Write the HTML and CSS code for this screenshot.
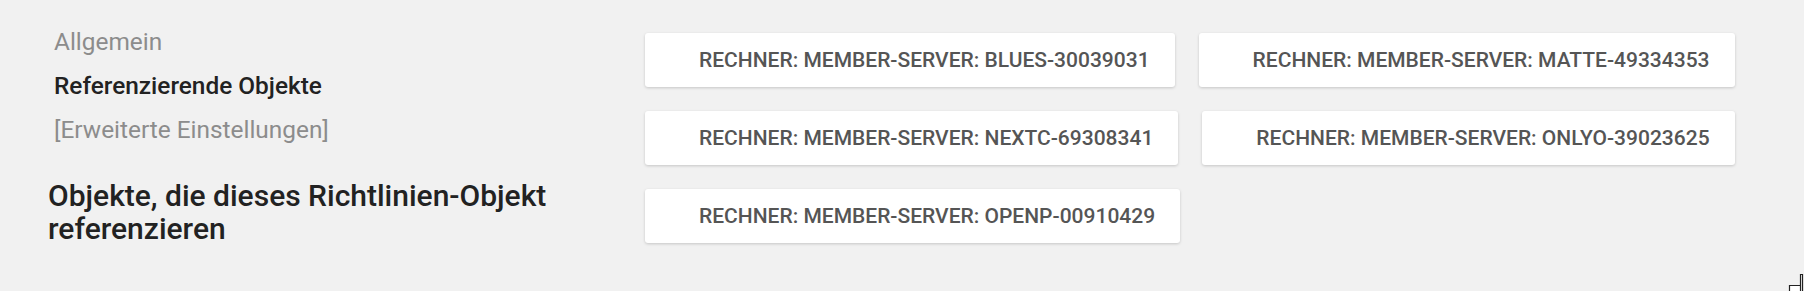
FILE: index.html
```html
<!DOCTYPE html>
<html lang="de">
<head>
<meta charset="utf-8">
<title>Referenzierende Objekte</title>
<link rel="stylesheet" href="styles.css">
</head>
<body>
<div class="page">
  <aside class="side">
    <nav class="nav">
      <a class="nav-item muted">Allgemein</a>
      <a class="nav-item active">Referenzierende Objekte</a>
      <a class="nav-item muted">[Erweiterte Einstellungen]</a>
    </nav>
    <h2 class="heading">Objekte, die dieses Richtlinien-Objekt referenzieren</h2>
  </aside>
  <section class="cards">
    <div class="card">Rechner: Member-Server: blues-30039031</div>
    <div class="card">Rechner: Member-Server: matte-49334353</div>
    <div class="card">Rechner: Member-Server: nextc-69308341</div>
    <div class="card">Rechner: Member-Server: onlyo-39023625</div>
    <div class="card">Rechner: Member-Server: openp-00910429</div>
  </section>
</div>
<svg class="cursor" width="16" height="18" viewBox="0 0 16 18"><path d="M12.5 1.5h2v17h-2z M1.5 12.5h11v6h-11z" fill="#fff" stroke="#222" stroke-width="1.2"/></svg>
</body>
</html>
```
FILE: styles.css
```css
html, body {
  margin: 0;
  padding: 0;
  background: #f1f1f1;
  font-family: Roboto, "Liberation Sans", sans-serif;
}
body {
  width: 1804px;
  height: 291px;
  overflow: hidden;
  position: relative;
}
.page {
  display: flex;
  padding: 20px 0 0 48px;
}
.side {
  width: 597px;
  flex: none;
}
.nav {
  display: flex;
  flex-direction: column;
  padding-left: 6px;
}
.nav-item {
  font-size: 24.4px;
  line-height: 44px;
  font-weight: 500;
}
.muted { color: #8c8c8c; font-weight: 400; }
.active { color: #222; }
.heading {
  margin: 27px 0 0 0;
  font-size: 30px;
  line-height: 33px;
  font-weight: 500;
  color: #222;
  width: 549px;
}
.cards {
  margin-top: 13px;
  display: flex;
  flex-wrap: wrap;
  align-content: flex-start;
  gap: 24px 24px;
  width: 1140px;
}
.card {
  height: 54px;
  display: flex;
  align-items: center;
  padding: 0 25px 0 54px;
  background: #fff;
  border-radius: 3px;
  box-shadow: 0 1px 3px rgba(0,0,0,0.18);
  font-size: 21px;
  font-weight: 500;
  text-transform: uppercase;
  color: #555;
  white-space: nowrap;
}
.cursor {
  position: absolute;
  right: 0;
  bottom: 0;
}
```
